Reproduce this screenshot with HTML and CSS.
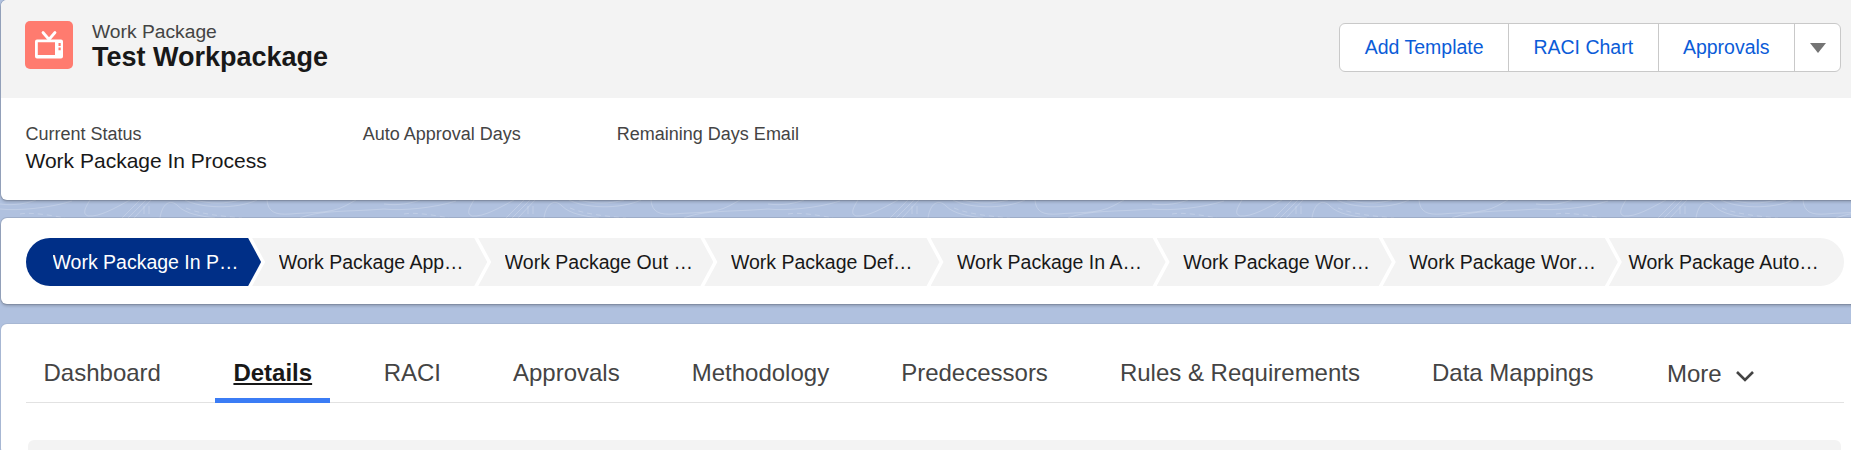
FILE: index.html
```html
<!DOCTYPE html>
<html lang="en">
<head>
    <meta charset="UTF-8">
    <meta name="viewport" content="width=device-width, initial-scale=1.0">
    <title>Test Workpackage</title>
    <link rel="stylesheet" href="styles.css">
</head>
<body>
    <div class="page">
        <section class="card highlights">
            <div class="page-header">
                <div class="record-title">
                    <span class="record-icon">
                        <svg viewBox="0 0 48 48" width="48" height="48">
                            <path d="M18 11.500l6 7 6-7" fill="none" stroke="#fff" stroke-width="2.800" stroke-linecap="round"/>
                            <path fill="#fff" fill-rule="evenodd" d="M12 18.500h24a2 2 0 0 1 2 2v15a2 2 0 0 1-2 2H12a2 2 0 0 1-2-2v-15a2 2 0 0 1 2-2zm.8 2.800V34h17.200V21.300zm20.700.8v2.800h2.200v-2.800zm0 4.400v2.800h2.200v-2.800z"/>
                        </svg>
                    </span>
                    <div class="record-name">
                        <div class="record-type">Work Package</div>
                        <h1>Test Workpackage</h1>
                    </div>
                </div>
                <div class="actions">
                    <button type="button">Add Template</button>
                    <button type="button">RACI Chart</button>
                    <button type="button">Approvals</button>
                    <button type="button" class="more-actions"><span class="caret"></span></button>
                </div>
            </div>
            <div class="fields">
                <div class="field">
                    <div class="field-label">Current Status</div>
                    <div class="field-value">Work Package In Process</div>
                </div>
                <div class="field">
                    <div class="field-label">Auto Approval Days</div>
                </div>
                <div class="field">
                    <div class="field-label">Remaining Days Email</div>
                </div>
            </div>
        </section>

        <section class="card path-card">
            <div class="path">
                <div class="step current"><span>Work Package In Process</span></div>
                <div class="step"><span>Work Package Approval</span></div>
                <div class="step"><span>Work Package Out of Scope</span></div>
                <div class="step"><span>Work Package Deferred</span></div>
                <div class="step"><span>Work Package In Approval</span></div>
                <div class="step"><span>Work Package Work Started</span></div>
                <div class="step"><span>Work Package Work Completed</span></div>
                <div class="step"><span>Work Package Auto Approved</span></div>
            </div>
        </section>

        <section class="card tabs-card">
            <nav class="tabs">
                <a>Dashboard</a>
                <a class="active">Details</a>
                <a>RACI</a>
                <a>Approvals</a>
                <a>Methodology</a>
                <a>Predecessors</a>
                <a>Rules &amp; Requirements</a>
                <a>Data Mappings</a>
                <a class="more">More
                    <svg viewBox="0 0 20 12" width="20" height="12">
                        <path d="M2 2l8 8 8-8" fill="none" stroke="#444" stroke-width="2.600"/>
                    </svg>
                </a>
            </nav>
            <div class="section-bar"></div>
        </section>
    </div>
</body>
</html>
```
FILE: styles.css
```css
html, body {
    margin: 0;
    height: 450px;
    overflow: hidden;
}
body {
    font-family: "Liberation Sans", Arial, sans-serif;
    background: #b0c1df;
    color: #181818;
}
.page {
    height: 450px;
    padding-left: 1px;
    overflow: hidden;
    background-color: #b0c1df;
    background-image: url("data:image/svg+xml,%3Csvg xmlns='http://www.w3.org/2000/svg' width='384' height='18'%3E%3Cg fill='none' stroke='%23fff' stroke-opacity='.2'%3E%3Cpath d='M90 0C85 8 82 14 88 16 100 17 115 8 130 0'/%3E%3Cpath d='M122 18L140 0M128 18L146 0M134 18L151 0M144 14V6M149 14V6'/%3E%3Cpath d='M160 18C162 4 170-2 178 6 186 14 200 16 215 18'/%3E%3Cpath d='M185 0C200 8 235 10 257 0M195 0C210 4 225 4 240 0'/%3E%3Cpath stroke-dasharray='5 4' d='M186 8C200 14 220 16 242 18'/%3E%3Cpath d='M267 0C268 12 275 15 290 14 310 12 330 14 345 6L356 0'/%3E%3Cpath d='M300 18C320 10 345 12 384 9M0 4C15 6 28 3 36 0'/%3E%3Cpath stroke-dasharray='5 4' d='M20 14C30 12 50 15 65 18'/%3E%3Cpath d='M0 9C18 11 50 8 72 1'/%3E%3C/g%3E%3C/svg%3E");
    background-position: 0 200px;
    background-repeat: repeat-x;
}
.card {
    margin-right: -8px;
    background: white;
    border-radius: 6px;
    box-shadow: 0 0 0 1px rgba(0,0,0,0.1), 0 2px 3px rgba(0,0,0,0.2);
    overflow: hidden;
}

/* record header */
.highlights {
    height: 200px;
}
.page-header {
    height: 98px;
    background: #f3f3f3;
    display: flex;
    justify-content: space-between;
    padding: 21px 18px 0 24px;
    box-sizing: border-box;
}
.record-title {
    display: flex;
    gap: 19px;
}
.record-icon {
    width: 48px;
    height: 48px;
    background: #ff7b6f;
    border-radius: 5px;
}
.record-icon svg {
    display: block;
}
.record-name {
    padding-top: 1px;
}
.record-type {
    font-size: 19.250px;
    line-height: 20px;
    color: #444;
}
h1 {
    margin: 0;
    font-size: 27px;
    line-height: 30px;
    font-weight: bold;
}
.actions {
    display: flex;
    height: 49px;
    margin-top: 2px;
    border: 1px solid #c9c9c9;
    border-radius: 6px;
    background: white;
    box-sizing: border-box;
    overflow: hidden;
}
.actions button {
    font: inherit;
    font-size: 19.500px;
    color: #0b5cd8;
    background: none;
    border: none;
    border-left: 1px solid #c9c9c9;
    padding: 0 24.400px;
}
.actions button:first-child {
    border-left: none;
}
.actions .more-actions {
    padding: 0 14.500px;
}
.caret {
    display: block;
    width: 0;
    height: 0;
    border-left: 8px solid transparent;
    border-right: 8px solid transparent;
    border-top: 10px solid #747474;
}
.fields {
    display: flex;
    padding: 25px 25px 0 24.500px;
}
.field {
    padding-right: 96px;
}
.field-label {
    font-size: 18px;
    line-height: 22px;
    color: #444;
}
.field-value {
    font-size: 21px;
    line-height: 28px;
    margin-top: 2px;
}

/* path */
.path-card {
    height: 86px;
    margin-top: 18px;
    padding: 20px 14px 0 25px;
    box-sizing: border-box;
}
.path {
    display: flex;
}
.step {
    flex: 0 0 235.125px;
    min-width: 0;
    box-sizing: border-box;
    height: 48px;
    margin-left: -9px;
    padding: 0 19.500px 0 26.500px;
    background: #f3f3f3;
    font-size: 19.500px;
    line-height: 48px;
    clip-path: polygon(0 0, calc(100% - 13px) 0, 100% 50%, calc(100% - 13px) 100%, 0 100%, 13px 50%);
}
.step span {
    display: block;
    overflow: hidden;
    white-space: nowrap;
    text-overflow: ellipsis;
}
.step:first-child {
    margin-left: 0;
    border-radius: 24px 0 0 24px;
    clip-path: polygon(0 0, calc(100% - 13px) 0, 100% 50%, calc(100% - 13px) 100%, 0 100%);
}
.step:last-child {
    padding: 0 24px 0 19.500px;
    border-radius: 0 24px 24px 0;
    clip-path: polygon(0 0, 100% 0, 100% 100%, 0 100%, 13px 50%);
}
.step.current {
    background: #002f87;
    color: white;
}

/* tabs */
.tabs-card {
    height: 130px;
    margin-top: 20px;
    padding: 0 15px 0 25px;
    box-shadow: 0 0 0 1px rgba(0,0,0,0.05);
}
.tabs {
    display: flex;
    gap: 36px;
    height: 79px;
    border-bottom: 1px solid #e2e2e2;
    box-sizing: border-box;
}
.tabs a {
    padding: 29px 18.500px 0 17.500px;
    font-size: 24px;
    line-height: 40px;
    color: #444;
    margin-bottom: -1px;
}
.tabs a.active {
    padding: 29px 18px 0;
    font-weight: bold;
    color: #181818;
    text-decoration: underline;
    border-bottom: 5px solid #3b7cf5;
}
.tabs a.more {
    padding: 30px 0 0 19px;
}
.tabs .more svg {
    margin-left: 7px;
}
.section-bar {
    height: 40px;
    margin: 37px 3px 0 2px;
    background: #f3f3f3;
    border-radius: 6px;
}
```
